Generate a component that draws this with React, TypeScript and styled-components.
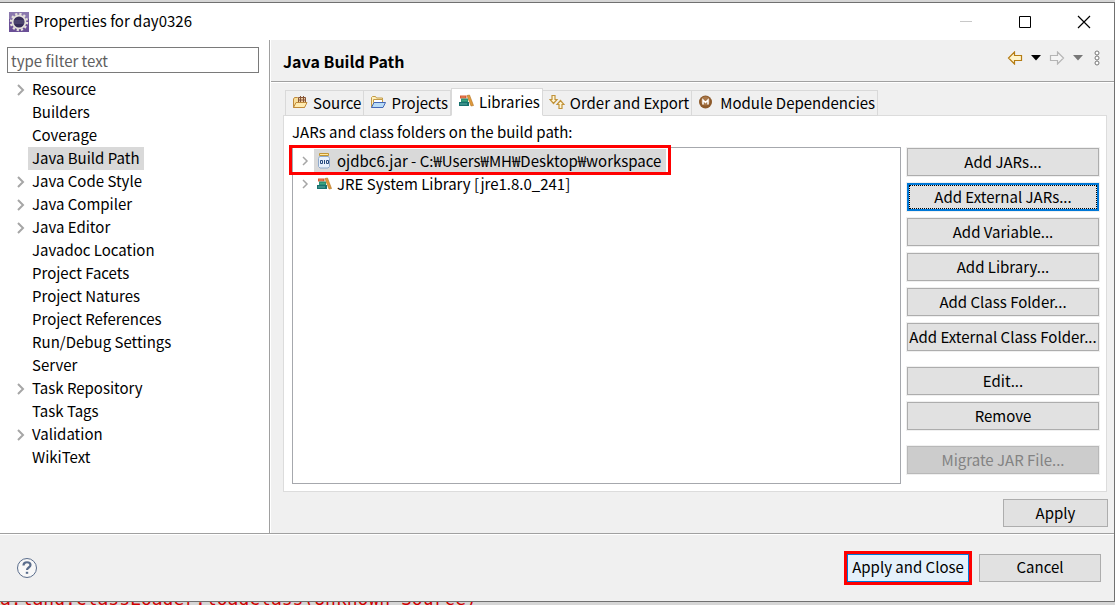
import React from "react";
import styled, { createGlobalStyle } from "styled-components";

const Global = createGlobalStyle`
  * { box-sizing: border-box; }
  html, body, #root { height: 100%; }
  body { margin: 0; background: #d6d6d6; overflow: hidden; }
  body, button, input { font-family: "Noto Sans CJK KR", sans-serif; font-size: 15px; line-height: 23px; color: #000; }
  button { padding: 0; cursor: default; }
`;

const Desktop = styled.div`
  position: relative;
  min-height: 100%;
  display: flex;
  padding: 2px 0 3px;
`;
const ConsoleLine = styled.div`
  position: absolute;
  left: 0;
  bottom: -4px;
  font: 18px/20px "DejaVu Sans Mono", monospace;
  color: #d00000;
  white-space: pre;
`;
const Window = styled.main`
  position: relative;
  flex: 1;
  display: flex;
  flex-direction: column;
  background: #f0f0f0;
  border: 1px solid #707070;
  border-left: 0;
`;
const TitleBar = styled.header`
  display: flex;
  align-items: center;
  height: 37px;
  padding: 0 23px 0 9px;
  background: #fff;
`;
const Title = styled.h1`
  flex: 1;
  margin: 0 0 0 5px;
  font-size: 15px;
  line-height: 21px;
  padding-bottom: 2px;
  font-weight: 400;
`;
const Caption = styled.div`
  display: flex;
  gap: 45px;
`;
const IconButton = styled.button`
  display: flex;
  border: 0;
  background: none;
`;
const Body = styled.div`
  flex: 1;
  display: flex;
`;
const Side = styled.nav`
  width: 270px;
  flex: none;
  padding: 7px 10px 0 7px;
  background: #fff;
  border-right: 1px solid #a0a0a0;
`;
const Filter = styled.input`
  display: block;
  width: 100%;
  height: 26px;
  padding: 0 3px;
  border: 1px solid #7a7a7a;
  outline: 0;
  &::placeholder { color: #606060; opacity: 1; }
`;
const Tree = styled.ul`
  list-style: none;
  margin: 5px 0 0;
  padding: 0;
`;
const TreeRow = styled.li`
  display: flex;
  align-items: center;
  height: 23px;
  padding-left: 9px;
`;
const Twisty = styled.span`
  display: flex;
  width: 12px;
`;
const Label = styled.span<{ $selected?: boolean }>`
  padding: 0 4px 2px;
  line-height: 21px;
  white-space: nowrap;
  background: ${(p) => (p.$selected ? "#d9d9d9" : "transparent")};
`;
const Page = styled.section`
  flex: 1;
  display: flex;
  flex-direction: column;
  min-width: 0;
  border-left: 1px solid #fff;
`;
const PageHead = styled.div`
  display: flex;
  align-items: center;
  justify-content: space-between;
  height: 43px;
  padding: 0 12px;
  border-bottom: 1px solid #fff;
  box-shadow: inset 0 -1px #a0a0a0;
`;
const PageTitle = styled.h2`
  margin: 0;
  font-size: 16px;
  font-weight: 700;
`;
const Tools = styled.div`
  display: flex;
  align-items: center;
  gap: 8px;
  margin: -6px -1px 0 0;
`;
const Tabs = styled.div`
  display: flex;
  align-items: flex-end;
  margin: 5px 0 -1px 14px;
  position: relative;
`;
const Tab = styled.button<{ $active?: boolean; $wide?: boolean }>`
  display: flex;
  align-items: center;
  gap: ${(p) => (p.$wide ? 7 : 5)}px;
  height: ${(p) => (p.$active ? 28 : 26)}px;
  padding: 0 2px 2px 6px;
  border: 1px solid #d9d9d9;
  border-left-width: ${(p) => (p.$active ? 1 : 0)}px;
  border-bottom-color: ${(p) => (p.$active ? "#fff" : "#d9d9d9")};
  background: ${(p) => (p.$active ? "#fff" : "#f0f0f0")};
  white-space: nowrap;
  &:first-child { border-left-width: 1px; }
`;
const Panel = styled.div`
  flex: 1;
  display: flex;
  flex-direction: column;
  margin: 0 7px 0 12px;
  padding: 4px 7px 7px 8px;
  background: #fff;
  border: 1px solid #dcdcdc;
`;
const Columns = styled.div`
  flex: 1;
  display: flex;
  gap: 6px;
  padding-top: 4px;
`;
const JarList = styled.ul`
  flex: 1;
  min-width: 0;
  margin: 0;
  padding: 1px 0 0 9px;
  list-style: none;
  border: 1px solid #a6a8ad;
`;
const JarRow = styled.li`
  display: flex;
  align-items: center;
  height: 23px;
`;
const JarLabel = styled.span<{ $selected?: boolean }>`
  display: flex;
  align-items: center;
  gap: 5px;
  height: 23px;
  padding: 0 5px 0 2px;
  white-space: nowrap;
  background: ${(p) => (p.$selected ? "#d9d9d9" : "transparent")};
`;
const Marker = styled.span`
  position: absolute;
  inset: -4px -5px -3px -13px;
  border: 3px solid #f00;
`;
const MarkedArea = styled.span`
  position: relative;
  display: flex;
  align-items: center;
`;
const Actions = styled.div`
  width: 192px;
  display: flex;
  flex-direction: column;
  gap: 7px;
  padding-top: 1px;
`;
const Push = styled.button<{ $focused?: boolean; $hot?: boolean; $width?: number; $spaced?: boolean }>`
  width: ${(p) => (p.$width ? `${p.$width}px` : "100%")};
  height: 28px;
  flex: none;
  padding-bottom: 2px;
  margin-top: ${(p) => (p.$spaced ? 9 : 0)}px;
  border: ${(p) => (p.$focused ? "2px solid #0078d7" : "1px solid #adadad")};
  border-color: ${(p) => (p.$focused || p.$hot ? "#0078d7" : "#adadad")};
  outline: ${(p) => (p.$focused ? "1px dotted #000" : "none")};
  outline-offset: -3px;
  background: ${(p) => (p.$hot ? "#e5f1fb" : "#e1e1e1")};
  box-shadow: ${(p) => (p.$hot ? "none" : "0 0 0 1px #f0f0f0")};
  line-height: 21px;
  white-space: nowrap;
  &:disabled { background: #ccc; border-color: #b8b8b8; color: #838383; }
`;
const ApplyRow = styled.div`
  display: flex;
  justify-content: flex-end;
  padding: 7px 6px 6px;
`;
const Footer = styled.footer`
  display: flex;
  align-items: center;
  gap: 7px;
  height: 68px;
  padding: 0 13px 0 16px;
  border-top: 1px solid #a0a0a0;
  box-shadow: inset 0 1px #fff;
`;
const Spacer = styled.span`
  flex: 1;
`;
const RedFrame = styled.span`
  display: flex;
  border: 3px solid #f00;
`;

const Chevron = () => (
  <svg width="10" height="12" viewBox="0 0 10 12" fill="none" stroke="#a6a6a6" strokeWidth="2"><path d="M2 1 7 6 2 11" /></svg>
);
const SmallChevron = () => (
  <svg width="7" height="10" viewBox="0 0 7 10" fill="none" stroke="#a6a6a6" strokeWidth="1.5"><path d="M1 1 5 5 1 9" /></svg>
);
const Gear = () => (
  <svg width="20" height="20" viewBox="0 0 20 20">
    <rect width="20" height="20" fill="#6a4f96" />
    <path d="M0 0h20v7H0z" fill="#8a78ad" />
    <circle cx="10" cy="10" r="8" fill="none" stroke="#e6e2dc" strokeWidth="2.4" strokeDasharray="2.2 2" />
    <circle cx="10" cy="10" r="6.4" fill="#352c58" stroke="#e6e2dc" strokeWidth="1.8" />
    <path d="M5 9h10M5 11h10" stroke="#655d84" />
  </svg>
);
const SourceIcon = () => (
  <svg width="16" height="16" viewBox="0 0 16 16">
    <path d="M1.500 13.500V5l1-1.500h3L7 5h5.500v8.500z" fill="#f8df9c" stroke="#c08a3a" />
    <path d="M6.500 3.500h7v5h-7z" fill="#efcfa4" stroke="#865536" />
    <path d="M8.500 2v7M11.500 2v7M6 6h8" stroke="#865536" />
    <path d="M1.500 13.500 4 8.500h11l-2.500 5z" fill="#ffebb0" stroke="#c08a3a" />
  </svg>
);
const ProjectsIcon = () => (
  <svg width="16" height="16" viewBox="0 0 16 16">
    <path d="M1.500 13.500V3.500l1-1h3l1 1.500h6v3" fill="#fff0bd" stroke="#c39a45" />
    <path d="M3.500 5.500h9v3h-9z" fill="#fff" stroke="#c39a45" />
    <path d="M1.500 13.500 4 8.500h11.500l-2.500 5z" fill="#b9dcf7" stroke="#4467b5" />
  </svg>
);
const BooksIcon = () => (
  <svg width="16" height="16" viewBox="0 0 16 16">
    <path d="M2 2.500h6.500v3H2z" fill="#d65b32" /><path d="M3 4h4" stroke="#e88a5c" />
    <path d="M3 5.500h7v3.500H3z" fill="#2a9273" /><path d="M4 7.500h5" stroke="#3fa584" />
    <path d="M1 9h10v4H1z" fill="#17716f" /><path d="M2 11h7" stroke="#5fb0a4" />
    <path d="m9 2.500 2.500-.5 4 10.500-2.500.5z" fill="#e09a3c" stroke="#b0701c" strokeWidth=".6" />
  </svg>
);
const OrderIcon = () => (
  <svg width="16" height="16" viewBox="0 0 16 16" fill="#fff6d6" stroke="#c1933a" strokeWidth="1.200">
    <path d="M3 1.500h3v4h2L4.500 9.500 1 5.500h2z" /><path d="M10 14.500h3v-4h2L11.500 6.500 8 10.500h2z" />
  </svg>
);
const ModuleIcon = () => (
  <svg width="15" height="15" viewBox="0 0 15 15">
    <circle cx="7.500" cy="7" r="6.500" fill="#8d5a2b" /><circle cx="7.500" cy="6" r="4.500" fill="#a9784a" />
    <path d="M5 9.500V5l2.500 2.500L10 5v4.500" fill="none" stroke="#fff" strokeWidth="1.500" />
  </svg>
);
const JarIcon = () => (
  <svg width="16" height="16" viewBox="0 0 16 16">
    <path d="M3.500 .5h9v2h-9z" fill="#ffe8a0" stroke="#c39632" />
    <path d="M3.500 3.500h9l1 2v8l-1.500 1.500H4L2.500 13.500v-8z" fill="#e8f1fc" stroke="#8fa9cb" />
    <path d="M4.500 7.500h2v3h-2zM8.500 7v4M10.500 7.500h2v3h-2z" fill="none" stroke="#294b7e" />
  </svg>
);
const Arrow = ({ forward }: { forward?: boolean }) => (
  <svg width="16" height="14" viewBox="0 0 16 14">
    <path d={forward ? "M1.500 4.500h7v-3.500l6 6-6 6v-3.500h-7z" : "M14.500 4.500h-7v-3.500l-6 6 6 6v-3.500h7z"} fill={forward ? "#f5f5f5" : "#fff4ca"} stroke={forward ? "#b5b5b5" : "#b57c13"} strokeWidth="1.200" />
  </svg>
);
const Caret = ({ color }: { color: string }) => (
  <svg width="10" height="6" viewBox="0 0 10 6"><path d="M0 0h10L5 5.500z" fill={color} /></svg>
);

const pages: [string, boolean][] = [
  ["Resource", true], ["Builders", false], ["Coverage", false], ["Java Build Path", false],
  ["Java Code Style", true], ["Java Compiler", true], ["Java Editor", true], ["Javadoc Location", false],
  ["Project Facets", false], ["Project Natures", false], ["Project References", false],
  ["Run/Debug Settings", false], ["Server", false], ["Task Repository", true], ["Task Tags", false],
  ["Validation", true], ["WikiText", false],
];

export default function App() {
  return (
    <Desktop>
      <Global />
      <ConsoleLine>a.lang.ClassLoader.loadClass(Unknown Source)</ConsoleLine>
      <Window>
        <TitleBar>
          <Gear />
          <Title>Properties for day0326</Title>
          <Caption>
            <IconButton aria-label="Minimize" disabled><svg width="14" height="14" viewBox="0 0 14 14"><path d="M1 6.500h12" stroke="#c8c8c8" /></svg></IconButton>
            <IconButton aria-label="Maximize"><svg width="14" height="14" viewBox="0 0 14 14"><path d="M1.500 1.500h11v11h-11z" fill="none" stroke="#000" /></svg></IconButton>
            <IconButton aria-label="Close"><svg width="14" height="14" viewBox="0 0 14 14"><path d="m1 1 12 12M13 1 1 13" stroke="#000" strokeWidth="1.200" /></svg></IconButton>
          </Caption>
        </TitleBar>
        <Body>
          <Side>
            <Filter aria-label="Filter" placeholder="type filter text" />
            <Tree>
              {pages.map(([name, open]) => (
                <TreeRow key={name}>
                  <Twisty>{open && <Chevron />}</Twisty>
                  <Label $selected={name === "Java Build Path"}>{name}</Label>
                </TreeRow>
              ))}
            </Tree>
          </Side>
          <Page>
            <PageHead>
              <PageTitle>Java Build Path</PageTitle>
              <Tools>
                <IconButton aria-label="Back"><Arrow /></IconButton>
                <IconButton aria-label="Back history"><Caret color="#000" /></IconButton>
                <IconButton aria-label="Forward"><Arrow forward /></IconButton>
                <IconButton aria-label="Forward history"><Caret color="#777" /></IconButton>
                <IconButton aria-label="Menu">
                  <svg width="12" height="16" viewBox="0 0 12 16" fill="#fff" stroke="#777"><circle cx="6" cy="3" r="2" /><circle cx="6" cy="8" r="2" /><circle cx="6" cy="13" r="2" /></svg>
                </IconButton>
              </Tools>
            </PageHead>
            <Tabs role="tablist">
              <Tab role="tab"><SourceIcon />Source</Tab>
              <Tab role="tab"><ProjectsIcon />Projects</Tab>
              <Tab role="tab" $active aria-selected><BooksIcon />Libraries</Tab>
              <Tab role="tab"><OrderIcon />Order and Export</Tab>
              <Tab role="tab" $wide><ModuleIcon />Module Dependencies</Tab>
            </Tabs>
            <Panel>
              <span>JARs and class folders on the build path:</span>
              <Columns>
                <JarList>
                  <JarRow>
                    <MarkedArea>
                      <Twisty><SmallChevron /></Twisty>
                      <JarLabel $selected><JarIcon />ojdbc6.jar - C:₩Users₩MH₩Desktop₩workspace</JarLabel>
                      <Marker />
                    </MarkedArea>
                  </JarRow>
                  <JarRow>
                    <Twisty><SmallChevron /></Twisty>
                    <JarLabel><BooksIcon />JRE System Library [jre1.8.0_241]</JarLabel>
                  </JarRow>
                </JarList>
                <Actions>
                  <Push>Add JARs...</Push>
                  <Push $focused>Add External JARs...</Push>
                  <Push>Add Variable...</Push>
                  <Push>Add Library...</Push>
                  <Push>Add Class Folder...</Push>
                  <Push>Add External Class Folder...</Push>
                  <Push $spaced>Edit...</Push>
                  <Push>Remove</Push>
                  <Push $spaced disabled>Migrate JAR File...</Push>
                </Actions>
              </Columns>
            </Panel>
            <ApplyRow><Push $width={105}>Apply</Push></ApplyRow>
          </Page>
        </Body>
        <Footer>
          <IconButton aria-label="Help">
            <svg width="22" height="22" viewBox="0 0 22 22" fill="none" stroke="#5a6d8c"><circle cx="11" cy="11" r="9.500" fill="#f8f8f8" /><path d="M7.500 8.500c0-4.500 7-4 7-.5 0 2.500-3.500 2.500-3.500 5" strokeWidth="2.200" /><path d="M11 14.800v2" strokeWidth="2.400" /></svg>
          </IconButton>
          <Spacer />
          <RedFrame><Push $hot $width={122}>Apply and Close</Push></RedFrame>
          <Push $width={122}>Cancel</Push>
        </Footer>
      </Window>
    </Desktop>
  );
}
